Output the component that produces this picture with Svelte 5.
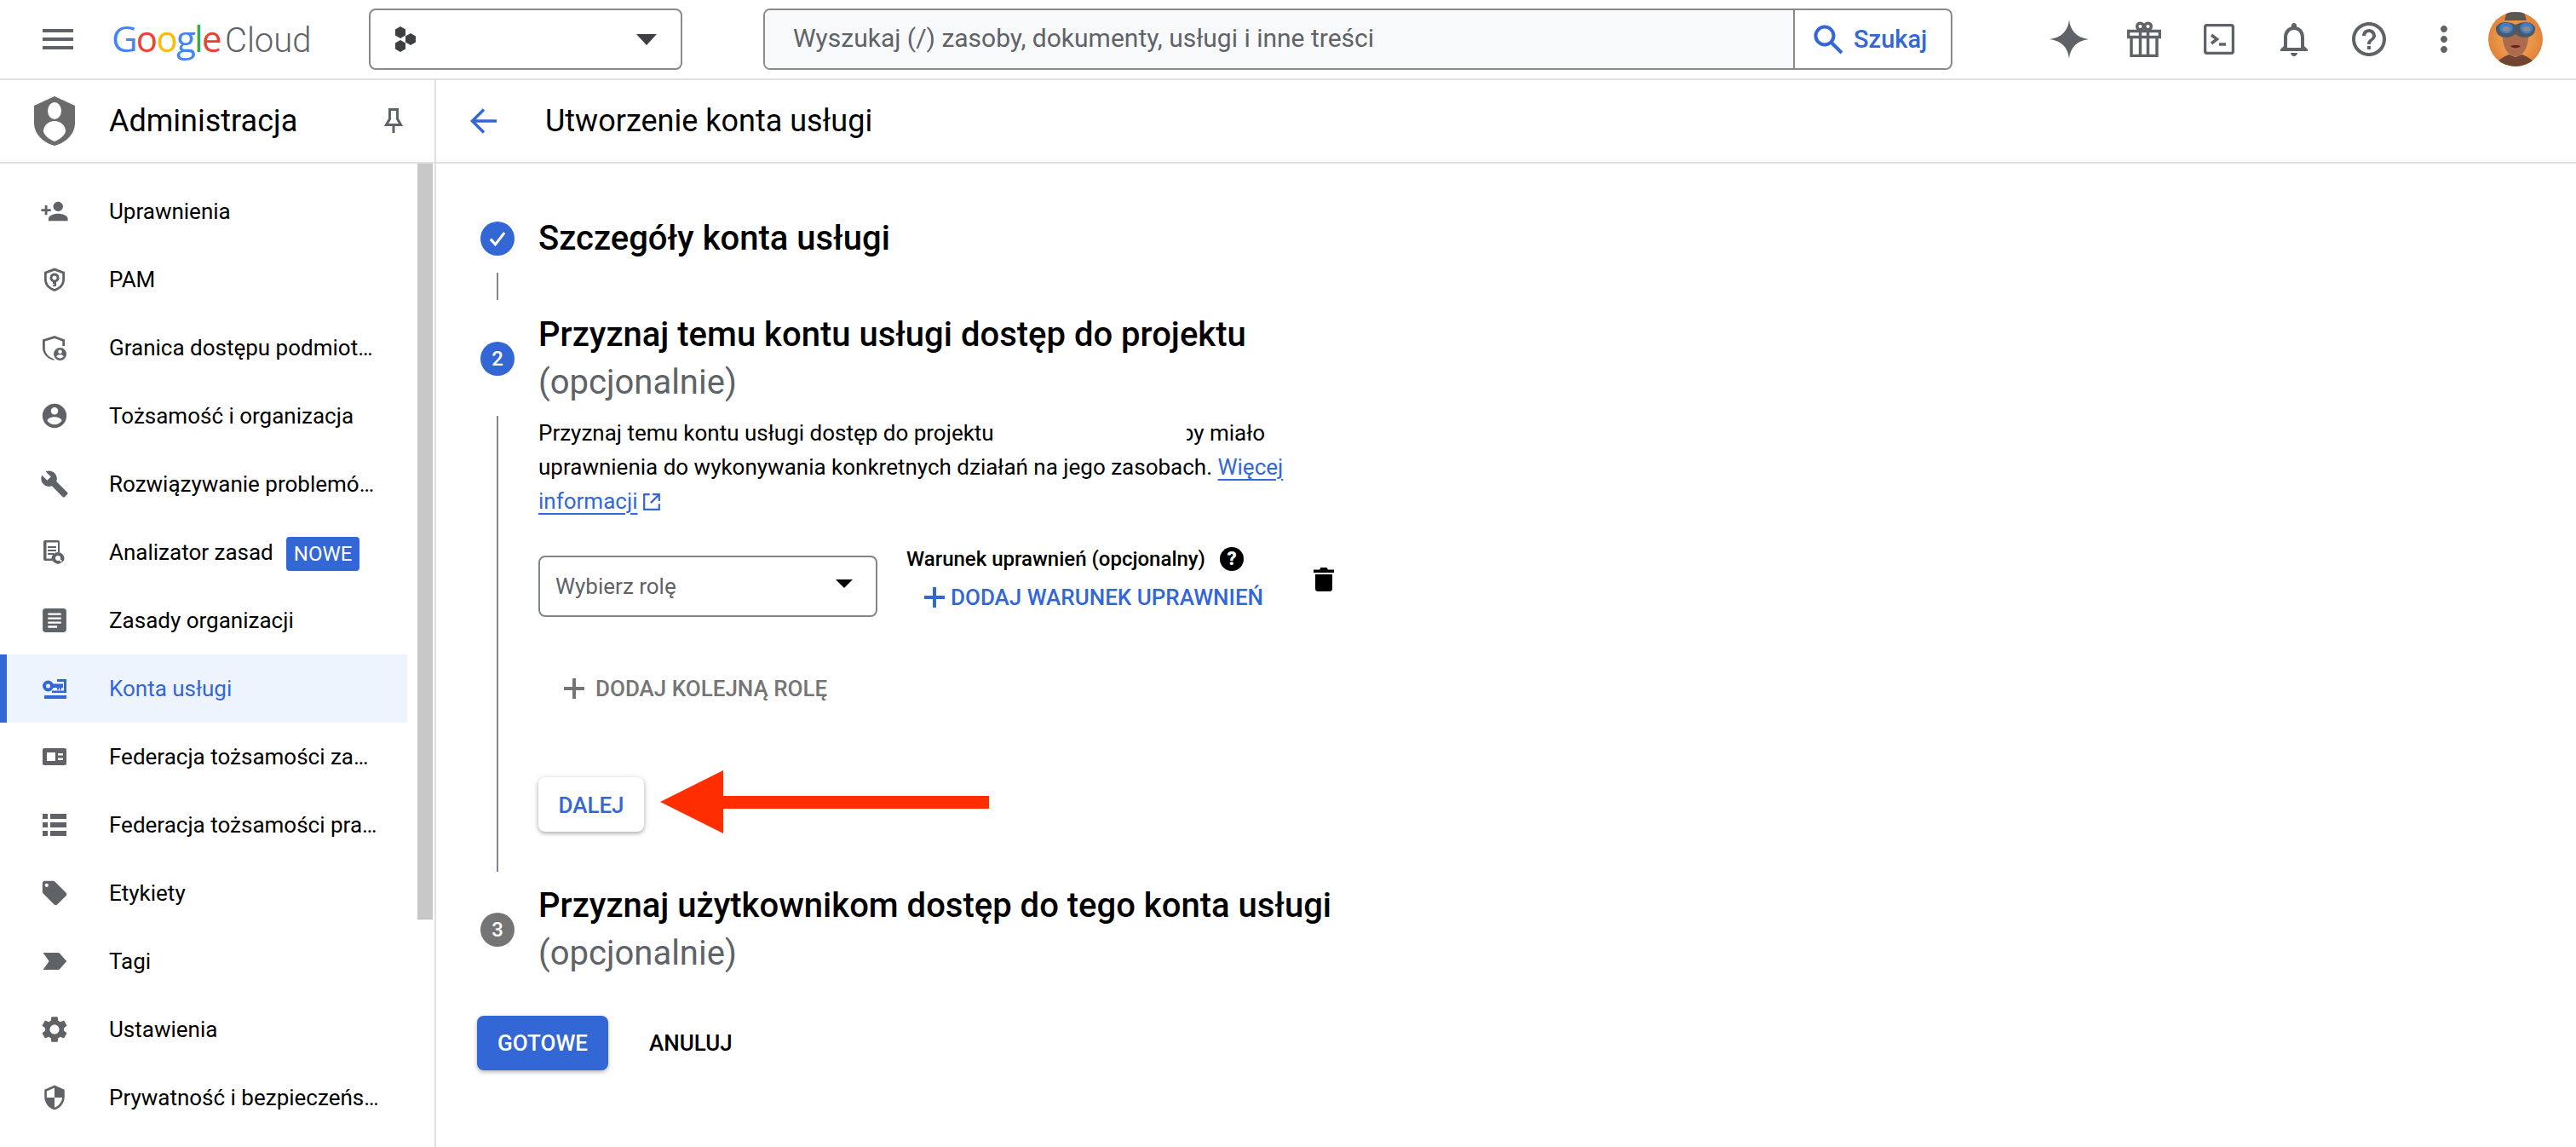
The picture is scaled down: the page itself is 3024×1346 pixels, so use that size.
<script lang="ts">
  type NavItem = { label: string; vb?: string; d?: string; kind?: string; badge?: string; active?: boolean };

  const nav: NavItem[] = [
    { label: 'Uprawnienia', d: 'M15 12c2.21 0 4-1.79 4-4s-1.79-4-4-4-4 1.79-4 4 1.79 4 4 4zm-9-2V7H4v3H1v2h3v3h2v-3h3v-2H6zm9 4c-2.67 0-8 1.34-8 4v2h16v-2c0-2.66-5.33-4-8-4z' },
    { label: 'PAM', kind: 'pam' },
    { label: 'Granica dostępu podmiot…', kind: 'boundary' },
    { label: 'Tożsamość i organizacja', d: 'M12 2C6.48 2 2 6.48 2 12s4.48 10 10 10 10-4.48 10-10S17.52 2 12 2zm0 3c1.66 0 3 1.34 3 3s-1.34 3-3 3-3-1.34-3-3 1.34-3 3-3zm0 14.2c-2.5 0-4.71-1.28-6-3.22.03-1.99 4-3.08 6-3.08 1.99 0 5.97 1.09 6 3.08-1.29 1.94-3.5 3.22-6 3.22z' },
    { label: 'Rozwiązywanie problemó…', d: 'M22.7 19l-9.1-9.1c.9-2.3.4-5-1.5-6.9-2-2-5-2.4-7.4-1.3L9 6 6 9 1.6 4.7C.4 7.1.9 10.1 2.9 12.1c1.9 1.9 4.6 2.4 6.9 1.5l9.1 9.1c.4.4 1 .4 1.4 0l2.3-2.3c.5-.4.5-1.1.1-1.4z' },
    { label: 'Analizator zasad', kind: 'analyzer', badge: 'NOWE' },
    { label: 'Zasady organizacji', vb: '1 1 22 22', d: 'M19 3H5c-1.1 0-2 .9-2 2v14c0 1.1.9 2 2 2h14c1.1 0 2-.9 2-2V5c0-1.1-.9-2-2-2zM7 6.500h10V8H7zM7 9.700h10v1.500H7zM7 12.900h10v1.500H7zM7 16.100h7v1.500H7z' },
    { label: 'Konta usługi', kind: 'key', active: true },
    { label: 'Federacja tożsamości za…', kind: 'card' },
    { label: 'Federacja tożsamości pra…', kind: 'list' },
    { label: 'Etykiety', d: 'M21.41 11.58l-9-9C12.05 2.22 11.55 2 11 2H4c-1.1 0-2 .9-2 2v7c0 .55.22 1.05.59 1.42l9 9c.36.36.86.58 1.41.58.55 0 1.05-.22 1.41-.59l7-7c.37-.36.59-.86.59-1.41 0-.55-.23-1.06-.59-1.42zM5.5 7C4.67 7 4 6.33 4 5.5S4.67 4 5.5 4 7 4.67 7 5.5 6.33 7 5.5 7z' },
    { label: 'Tagi', d: 'M2.5 5H15c.6 0 1.1.3 1.4.7L22 12l-5.6 6.3c-.3.4-.8.7-1.4.7H2.5L7.5 12z' },
    { label: 'Ustawienia', vb: '1 1 22 22', d: 'M19.14 12.94c.04-.3.06-.61.06-.94 0-.32-.02-.64-.07-.94l2.03-1.58c.18-.14.23-.41.12-.61l-1.92-3.32c-.12-.22-.37-.29-.59-.22l-2.39.96c-.5-.38-1.03-.7-1.62-.94l-.36-2.54c-.04-.24-.24-.41-.48-.41h-3.84c-.24 0-.43.17-.47.41l-.36 2.54c-.59.24-1.13.57-1.62.94l-2.39-.96c-.22-.08-.47 0-.59.22L2.74 8.87c-.12.21-.08.47.12.61l2.03 1.58c-.05.3-.09.63-.09.94s.02.64.07.94l-2.03 1.58c-.18.14-.23.41-.12.61l1.92 3.32c.12.22.37.29.59.22l2.39-.96c.5.38 1.03.7 1.62.94l.36 2.54c.05.24.24.41.48.41h3.84c.24 0 .44-.17.47-.41l.36-2.54c.59-.24 1.13-.56 1.62-.94l2.39.96c.22.08.47 0 .59-.22l1.92-3.32c.12-.22.07-.47-.12-.61l-2.01-1.58zM12 15.6c-1.98 0-3.6-1.62-3.6-3.6s1.62-3.6 3.6-3.6 3.6 1.62 3.6 3.6-1.62 3.6-3.6 3.6z' },
    { label: 'Prywatność i bezpieczeńs…', vb: '-1 -1 26 26', d: 'M12 1L3 5v6c0 5.55 3.84 10.74 9 12 5.16-1.26 9-6.45 9-12V5l-9-4zm0 10.99h7c-.53 4.12-3.28 7.79-7 8.94V12H5V6.3l7-3.11v8.8z' }
  ];
</script>

<div class="page">
  <header class="topbar">
    <svg class="menu" viewBox="0 0 36 24"><path d="M0 0h36v4H0zM0 10h36v4H0zM0 20h36v4H0z" /></svg>
    <div class="logo">
      <span class="google"><span class="b">G</span><span class="r">o</span><span class="y">o</span><span class="b">g</span><span class="g">l</span><span class="r">e</span></span>
      <span class="cloud">Cloud</span>
    </div>
    <div class="project">
      <svg class="hexes" viewBox="0 0 26 30"><path d="M7 0l6 3.5v7L7 14 1 10.5v-7zM7 16l6 3.5v7L7 30l-6-3.5v-7zM19 8l6 3.5v7L19 22l-6-3.5v-7z" /></svg>
      <svg class="caret" viewBox="0 0 24 13"><path d="M0 0h24L12 13z" /></svg>
    </div>
    <div class="search">
      <div class="search-input">Wyszukaj (/) zasoby, dokumenty, usługi i inne treści</div>
      <div class="search-btn">
        <svg viewBox="0 0 35 35"><circle cx="13" cy="13" r="10.5" /><path d="M21 21l12 12" /></svg>
        <span>Szukaj</span>
      </div>
    </div>
    <div class="top-icons">
      <div class="icon-btn">
        <svg width="46" height="46" viewBox="0 0 46 46"><path d="M23 0c1.2 13 9 21.5 23 23-14 1.500-21.800 10-23 23-1.200-13-9-21.500-23-23 14-1.500 21.800-10 23-23z" /></svg>
      </div>
      <div class="icon-btn">
        <svg width="40" height="42" viewBox="0 0 40 42" class="line">
          <path d="M1.500 11.500h37v7h-37zM5 18.500V40.500h30V18.500M15.500 11.500v29M24.500 11.500v29" />
          <circle cx="15.500" cy="6" r="3.800" /><circle cx="24.500" cy="6" r="3.800" />
        </svg>
      </div>
      <div class="icon-btn">
        <svg width="36" height="36" viewBox="0 0 36 36" class="line">
          <rect x="1.500" y="1.500" width="33" height="33" rx="2.500" />
          <path d="M9 13l6.500 5L9 23" stroke-width="3.500" />
          <path d="M18 24h8" stroke-width="3.500" />
        </svg>
      </div>
      <div class="icon-btn">
        <svg width="48" height="48" viewBox="0 0 24 24"><path d="M12 22c1.100 0 2-.9 2-2h-4c0 1.100.9 2 2 2zm6-6v-5c0-3.070-1.630-5.640-4.500-6.320V4c0-.83-.67-1.500-1.500-1.500s-1.500.67-1.500 1.500v.68C7.640 5.360 6 7.920 6 11v5l-2 2v1h16v-1l-2-2zm-2 1H8v-6c0-2.480 1.510-4.500 4-4.500s4 2.020 4 4.500v6z" /></svg>
      </div>
      <div class="icon-btn">
        <svg width="48" height="48" viewBox="0 0 24 24"><path d="M11 18h2v-2h-2v2zm1-16C6.480 2 2 6.480 2 12s4.480 10 10 10 10-4.480 10-10S17.520 2 12 2zm0 18c-4.410 0-8-3.590-8-8s3.590-8 8-8 8 3.590 8 8-3.590 8-8 8zm0-14c-2.210 0-4 1.790-4 4h2c0-1.100.9-2 2-2s2 .9 2 2c0 2-3 1.750-3 5h2c0-2.250 3-2.500 3-5 0-2.210-1.790-4-4-4z" /></svg>
      </div>
      <div class="icon-btn">
        <svg width="48" height="48" viewBox="0 0 24 24"><path d="M12 8c1.100 0 2-.9 2-2s-.9-2-2-2-2 .9-2 2 .9 2 2 2zm0 2c-1.100 0-2 .9-2 2s.9 2 2 2 2-.9 2-2-.9-2-2-2zm0 6c-1.100 0-2 .9-2 2s.9 2 2 2 2-.9 2-2-.9-2-2-2z" /></svg>
      </div>
    </div>
    <svg class="avatar" viewBox="0 0 64 64">
      <defs>
        <radialGradient id="bg" cx="0.5" cy="0.5" r="0.6"><stop offset="0" stop-color="#f7b267" /><stop offset="1" stop-color="#dd7a30" /></radialGradient>
        <clipPath id="round"><circle cx="32" cy="32" r="32" /></clipPath>
      </defs>
      <g clip-path="url(#round)">
        <rect width="64" height="64" fill="url(#bg)" />
        <path d="M16 20c0 22 7 32 16 32s16-10 16-32z" fill="#ab6b4c" />
        <path d="M8 64c2-8 10-11 16-14l8 3 8-3c6 3 14 6 16 14z" fill="#704334" />
        <path d="M22 0h20l3 10H19z" fill="#5a5654" />
        <path d="M26 40c3-1.500 9-1.500 12 0-2 3-10 3-12 0z" fill="#6e1f18" />
        <path d="M9 18c3-7 14-8 23-3 9-5 20-4 23 3 1 8-5 12-12 12-5 0-8-2-11-4-3 2-6 4-11 4-7 0-13-4-12-12z" fill="#4c5a68" />
        <ellipse cx="21" cy="19" rx="8" ry="6.500" fill="#3f7fc9" />
        <ellipse cx="45" cy="19" rx="7.500" ry="6.500" fill="#3f7fc9" />
        <ellipse cx="21" cy="20" rx="4.500" ry="3" fill="#8f8a88" />
        <ellipse cx="45" cy="20" rx="4.500" ry="3" fill="#8f8a88" />
      </g>
    </svg>
  </header>

  <div class="layout">
    <aside class="side">
      <div class="side-head">
        <svg class="admin-logo" viewBox="0 0 48 58">
          <path d="M24 0l24 11v20c0 13-10 23-24 27C10 54 0 44 0 31V11z" fill="#6b6b6b" />
          <ellipse cx="24" cy="17" rx="8" ry="10" fill="#fff" />
          <path d="M24 29c7 0 13 5 13 12 0 3-5 9-13 12-8-3-13-9-13-12 0-7 6-12 13-12z" fill="#fff" />
        </svg>
        <span class="side-title">Administracja</span>
        <svg class="pin" viewBox="0 0 22 30"><path d="M5 1.500h12M6.500 1.500v11L2.500 19.500h17l-4-7v-11M11 19.500V29" /></svg>
      </div>
      <div class="side-body">
        <nav class="nav">
          {#each nav as item}
            <div class="row" class:active={item.active}>
              <svg class="nav-icon" viewBox={item.kind ? '-3 -3 34 34' : item.vb ?? '0 0 24 24'}>
                {#if item.kind === 'pam'}
                  <path fill-rule="evenodd" d="M14 .5L26 5v9c0 7-5 11.500-12 14C7 25.500 2 21 2 14V5zM14 3.800L4.800 7v7c0 5 3.500 9 9.200 11 5.700-2 9.200-6 9.200-11V7z" />
                  <path fill-rule="evenodd" d="M14 6.500a5.500 5.500 0 0 1 2 10.600V22h-4v-1.500h1.500V19H12v-1.900A5.500 5.500 0 0 1 14 6.500zm0 3a2.500 2.500 0 1 0 0 5 2.500 2.500 0 0 0 0-5z" />
                {:else if item.kind === 'boundary'}
                  <path d="M14 0L26 4.500V12h-2.700V6.500L14 3 2.800 6.500V15c0 5 3.600 9.500 10 12l1.500 1.500H12C5 26 0 21 0 14V4.500z" />
                  <path fill-rule="evenodd" d="M20.500 14a7.500 7.500 0 1 1 0 15 7.500 7.500 0 0 1 0-15zm0 2.500a2.300 2.300 0 1 0 0 4.600 2.300 2.300 0 0 0 0-4.600zm0 5.500c-2 0-4 1-4.200 2.500a5.500 5.500 0 0 0 8.400 0C24.500 23 22.500 22 20.500 22z" />
                {:else if item.kind === 'analyzer'}
                  <path fill-rule="evenodd" d="M3 0h15c1.100 0 2 .9 2 2v12h-2V2.500H4.500v19H11v2.500H3c-1.100 0-2-.9-2-2V2c0-1.100.9-2 2-2z" />
                  <path d="M6 7h10v2H6zM6 11h10v2H6zM6 15h7v2H6z" />
                  <path fill-rule="evenodd" d="M18 14a7.500 7.500 0 0 1 7.500 7.500c0 3-4 5.500-7.500 6.500-3.500-1-7.500-3.500-7.500-6.500A7.500 7.500 0 0 1 18 14zm0 4a3 3 0 1 0 1.600 5.500l2 2 1.200-1.200-2-2A3 3 0 0 0 18 18z" />
                {:else if item.kind === 'key'}
                  <path fill-rule="evenodd" d="M6.500 4.500a6.500 6.500 0 1 1 0 13 6.500 6.500 0 0 1 0-13zm0 4a2.500 2.500 0 1 0 0 5 2.500 2.500 0 0 0 0-5z" />
                  <path d="M12 8.500h12V13h-2v2.500h-2V13h-1v2.500h-2V13h-5zM17 3h11v16H11v-2.500h14V6h-8zM2 22h26v4H2z" />
                {:else if item.kind === 'card'}
                  <path fill-rule="evenodd" d="M2 4h24c1.100 0 2 .9 2 2v16c0 1.100-.9 2-2 2H2c-1.100 0-2-.9-2-2V6c0-1.100.9-2 2-2zm3 5v10h10V9zm13 1v2.500h6V10zm0 5.500V18h6v-2.500z" />
                {:else if item.kind === 'list'}
                  <path d="M0 1h6v6H0zM9 1h19v6H9zM0 11h6v6H0zM9 11h19v6H9zM0 21h6v6H0zM9 21h19v6H9z" />
                {:else}
                  <path fill-rule="evenodd" d={item.d} />
                {/if}
              </svg>
              <span class="row-label">{item.label}</span>
              {#if item.badge}<span class="badge">{item.badge}</span>{/if}
            </div>
          {/each}
        </nav>
        <div class="scroll-thumb"></div>
      </div>
    </aside>

    <main class="main">
      <div class="page-head">
        <svg class="back" viewBox="0 0 32 30"><path d="M31 15H3M16 1.500L2.500 15 16 28.500" /></svg>
        <h1>Utworzenie konta usługi</h1>
      </div>

      <div class="content">
        <section class="step done">
          <div class="bullet blue">
            <svg viewBox="0 0 24 24" width="30" height="30"><path d="M5.500 12.500l4.500 5L18.500 6.500" /></svg>
          </div>
          <h2>Szczegóły konta usługi</h2>
        </section>
        <div class="link-line short"></div>

        <section class="step two">
          <div class="bullet blue">2</div>
          <h2>Przyznaj temu kontu usługi dostęp do projektu<br /><span class="opt">(opcjonalnie)</span></h2>
        </section>

        <div class="step-body">
          <div class="desc">
            <div class="desc-line">
              <span>Przyznaj temu kontu usługi dostęp do projektu</span>
              <span class="redacted"></span>
              <span>by miało</span>
            </div>
            <div>uprawnienia do wykonywania konkretnych działań na jego zasobach. <a href="#more">Więcej</a></div>
            <div><a href="#more">informacji</a><svg class="ext" viewBox="0 0 20 20"><path d="M8 2H2v16h16v-6M11 2h7v7M18 2L9 11" /></svg></div>
          </div>

          <div class="role-row">
            <div class="select">
              <span>Wybierz rolę</span>
              <svg viewBox="0 0 20 10"><path d="M0 0h20L10 10z" /></svg>
            </div>
            <div class="cond">
              <div class="cond-label">
                Warunek uprawnień (opcjonalny)
                <svg viewBox="0 0 28 28"><circle cx="14" cy="14" r="14" /><text x="14" y="21" text-anchor="middle">?</text></svg>
              </div>
              <div class="cond-add">
                <svg class="plus" viewBox="0 0 24 24"><path d="M12 0v24M0 12h24" /></svg>
                DODAJ WARUNEK UPRAWNIEŃ
              </div>
            </div>
            <svg class="trash" viewBox="0 0 24 28"><path d="M8.500 0h7l1.500 2.500h7V6H0V2.500h7zM2 8h20v17c0 1.700-1.300 3-3 3H5c-1.700 0-3-1.300-3-3z" /></svg>
          </div>

          <div class="add-role">
            <svg class="plus" viewBox="0 0 24 24"><path d="M12 0v24M0 12h24" /></svg>
            DODAJ KOLEJNĄ ROLĘ
          </div>

          <div class="next-row">
            <button class="next">DALEJ</button>
            <svg class="arrow" viewBox="0 0 386 74"><path d="M0 37L74 0v30h312v15H74v29z" /></svg>
          </div>
        </div>

        <section class="step three">
          <div class="bullet gray">3</div>
          <h2>Przyznaj użytkownikom dostęp do tego konta usługi<br /><span class="opt">(opcjonalnie)</span></h2>
        </section>

        <div class="actions">
          <button class="done-btn">GOTOWE</button>
          <button class="cancel">ANULUJ</button>
        </div>
      </div>
    </main>
  </div>
</div>

<style>
  :global(body) {
    margin: 0;
    background: #fff;
  }

  .page {
    width: 3024px;
    height: 1346px;
    overflow: hidden;
    background: #fff;
    color: #000;
    font-family: Roboto, "Liberation Sans", sans-serif;
  }

  /* top bar */
  .topbar {
    height: 92px;
    display: flex;
    align-items: center;
    border-bottom: 2px solid #e0e0e0;
    box-sizing: content-box;
  }

  .menu {
    width: 36px;
    height: 24px;
    margin-left: 50px;
    fill: #5f6368;
    flex: none;
  }

  .logo {
    margin-left: 45px;
    width: 302px;
    display: flex;
    align-items: baseline;
    gap: 5px;
    line-height: 1;
    flex: none;
  }

  .google { font-family: "Open Sans", Roboto, sans-serif; font-size: 42px; letter-spacing: -1.700px; }
  .cloud { color: #5f6368; font-weight: 300; font-size: 40px; }
  .b { color: #4285f4; }
  .r { color: #ea4335; }
  .y { color: #fbbc05; }
  .g { color: #34a853; }

  .project {
    width: 368px;
    height: 72px;
    box-sizing: border-box;
    border: 2px solid #8a8a8a;
    border-radius: 8px;
    display: flex;
    align-items: center;
    justify-content: space-between;
    padding: 0 28px 0 28px;
    flex: none;
  }

  .hexes { width: 26px; height: 30px; fill: #3c4043; }
  .caret { width: 24px; height: 13px; fill: #3c4043; }

  .search {
    margin-left: 95px;
    width: 1396px;
    height: 72px;
    box-sizing: border-box;
    border: 2px solid #8a8a8a;
    border-radius: 8px;
    display: flex;
    flex: none;
  }

  .search-input {
    flex: 1;
    background: #f8f9fa;
    border-radius: 6px 0 0 6px;
    padding-left: 33px;
    font-size: 30px;
    line-height: 66px;
    color: #5f6368;
    border-right: 2px solid #8a8a8a;
  }

  .search-btn {
    width: 183px;
    display: flex;
    align-items: center;
    gap: 12px;
    padding-left: 22px;
    box-sizing: border-box;
    color: #3367d6;
    font-size: 29px;
    font-weight: 500;
  }

  .search-btn svg {
    width: 35px;
    height: 35px;
    fill: none;
    stroke: #3367d6;
    stroke-width: 4;
  }

  .top-icons {
    margin-left: 93px;
    display: flex;
    flex: none;
  }

  .icon-btn {
    width: 88px;
    display: flex;
    align-items: center;
    justify-content: center;
  }

  .icon-btn svg { fill: #5f6368; }

  .icon-btn svg.line {
    fill: none;
    stroke: #5f6368;
    stroke-width: 3.500;
  }

  .avatar {
    width: 64px;
    height: 64px;
    margin-left: 8px;
    flex: none;
  }

  /* body */
  .layout {
    display: flex;
    height: 1252px;
  }

  .side {
    width: 510px;
    flex: none;
    border-right: 2px solid #e0e0e0;
  }

  .side-head {
    height: 96px;
    border-bottom: 2px solid #e0e0e0;
    display: flex;
    align-items: center;
    position: relative;
  }

  .admin-logo {
    width: 48px;
    height: 58px;
    margin-left: 40px;
    flex: none;
  }

  .side-title {
    margin-left: 40px;
    font-size: 36px;
  }

  .pin {
    width: 22px;
    height: 30px;
    margin-left: auto;
    margin-right: 37px;
    fill: none;
    stroke: #5f6368;
    stroke-width: 3;
  }

  .side-body {
    display: flex;
    align-items: flex-start;
  }

  .nav {
    width: 478px;
    padding-top: 16px;
    flex: none;
  }

  .row {
    height: 80px;
    display: flex;
    align-items: center;
    padding-left: 47px;
    box-sizing: border-box;
  }

  .row.active {
    background: #eef4fe;
    border-left: 8px solid #3367d6;
    padding-left: 39px;
    color: #3367d6;
  }

  .nav-icon {
    width: 34px;
    height: 34px;
    fill: #5f6368;
    flex: none;
  }

  .row.active .nav-icon { fill: #3367d6; }

  .row-label {
    margin-left: 47px;
    font-size: 26px;
    white-space: nowrap;
  }

  .badge {
    margin-left: 15px;
    background: #3367d6;
    color: #fff;
    font-size: 24px;
    line-height: 40px;
    padding: 0 9px;
    border-radius: 4px;
    margin-top: 4px;
  }

  .scroll-thumb {
    width: 18px;
    height: 886px;
    margin-left: 12px;
    background: #c8c8c8;
    border-bottom: 1px solid #bbb;
  }

  .main {
    flex: 1;
    min-width: 0;
  }

  .page-head {
    height: 96px;
    border-bottom: 2px solid #e0e0e0;
    display: flex;
    align-items: center;
  }

  .back {
    width: 32px;
    height: 30px;
    margin-left: 40px;
    fill: none;
    stroke: #3367d6;
    stroke-width: 3.500;
    flex: none;
  }

  h1 {
    margin: 0 0 0 56px;
    font-size: 36px;
    font-weight: 400;
  }

  .content {
    padding: 68px 0 0 52px;
  }

  .step {
    display: flex;
    align-items: center;
    gap: 28px;
  }

  .bullet {
    width: 40px;
    height: 40px;
    border-radius: 50%;
    color: #fff;
    font-size: 24px;
    font-weight: 500;
    display: flex;
    align-items: center;
    justify-content: center;
    flex: none;
  }

  .bullet svg {
    fill: none;
    stroke: #fff;
    stroke-width: 2.500;
  }

  .blue { background: #3367d6; }
  .gray { background: #757575; }

  h2 {
    margin: 0;
    font-size: 40px;
    font-weight: 500;
    line-height: 56px;
  }

  .opt {
    color: #5f6368;
    font-weight: 400;
  }

  .done h2 { line-height: 40px; }

  .link-line {
    width: 2px;
    background: #80868b;
    margin-left: 19px;
  }

  .link-line.short {
    height: 32px;
    margin-top: 20px;
  }

  .two { margin-top: 13px; }
  .three { margin-top: 12px; }

  .step-body {
    margin: 11px 0 0 19px;
    padding-left: 47px;
    border-left: 2px solid #80868b;
    height: 535px;
    box-sizing: border-box;
  }

  .desc {
    width: 880px;
    font-size: 26px;
    line-height: 40px;
    white-space: nowrap;
  }

  .desc-line {
    display: flex;
    align-items: center;
  }

  /* white patch that hides the project name, it clips the first letter after it */
  .redacted {
    width: 220px;
    height: 36px;
    margin: 0 -6px 0 6px;
    background: #fff;
    position: relative;
    z-index: 1;
    flex: none;
  }

  .desc a {
    color: #3367d6;
    text-decoration: underline;
    text-decoration-thickness: 2px;
    text-underline-offset: 5px;
  }

  .ext {
    width: 22px;
    height: 22px;
    fill: none;
    stroke: #3367d6;
    stroke-width: 2;
    margin-left: 6px;
    vertical-align: -3px;
  }

  .role-row {
    display: flex;
    align-items: flex-start;
    margin-top: 34px;
  }

  .select {
    margin-top: 10px;
    width: 398px;
    height: 72px;
    box-sizing: border-box;
    border: 2px solid #80868b;
    border-radius: 8px;
    display: flex;
    align-items: center;
    justify-content: space-between;
    padding: 0 27px 0 18px;
    font-size: 26px;
    color: #5f6368;
    flex: none;
  }

  .select svg {
    width: 20px;
    height: 10px;
    fill: #000;
    margin-top: -6px;
  }

  .cond {
    margin-left: 34px;
    width: 478px;
    flex: none;
  }

  .cond-label {
    display: flex;
    align-items: center;
    gap: 17px;
    font-size: 24px;
    font-weight: 500;
    height: 28px;
  }

  .cond-label svg {
    width: 28px;
    height: 28px;
    fill: #000;
  }

  .cond-label text {
    fill: #fff;
    font-size: 22px;
    font-weight: 900;
    font-family: Roboto, sans-serif;
  }

  .plus {
    width: 24px;
    height: 24px;
    fill: none;
    stroke: currentColor;
    stroke-width: 4;
    flex: none;
  }

  .cond-add {
    display: flex;
    align-items: center;
    gap: 7px;
    margin: 16px 0 0 21px;
    color: #3367d6;
    font-size: 26px;
    font-weight: 500;
    white-space: nowrap;
  }

  .trash {
    width: 24px;
    height: 28px;
    margin-top: 24px;
    flex: none;
  }

  .add-role {
    display: flex;
    align-items: center;
    gap: 13px;
    margin: 69px 0 0 30px;
    color: #757575;
    font-size: 26px;
    font-weight: 500;
    white-space: nowrap;
  }

  .next-row {
    display: flex;
    align-items: center;
    gap: 19px;
    margin-top: 87px;
  }

  button {
    font-family: inherit;
    border: 0;
    border-radius: 8px;
    height: 64px;
    font-size: 26px;
    font-weight: 500;
    padding: 0;
    flex: none;
  }

  .next {
    width: 124px;
    background: #fff;
    color: #3367d6;
    padding-top: 2px;
    box-shadow: 0 2px 4px rgba(60, 64, 67, 0.35), 0 1px 8px rgba(60, 64, 67, 0.15);
  }

  .arrow {
    width: 386px;
    height: 74px;
    fill: #ff2d00;
    margin-top: -6px;
    flex: none;
  }

  .actions {
    display: flex;
    align-items: center;
    margin: 45px 0 0 -4px;
  }

  .done-btn {
    width: 154px;
    background: #3367d6;
    color: #fff;
    box-shadow: 0 2px 5px rgba(60, 64, 67, 0.4);
  }

  .cancel {
    margin-left: 48px;
    background: none;
    color: #000;
  }
</style>
